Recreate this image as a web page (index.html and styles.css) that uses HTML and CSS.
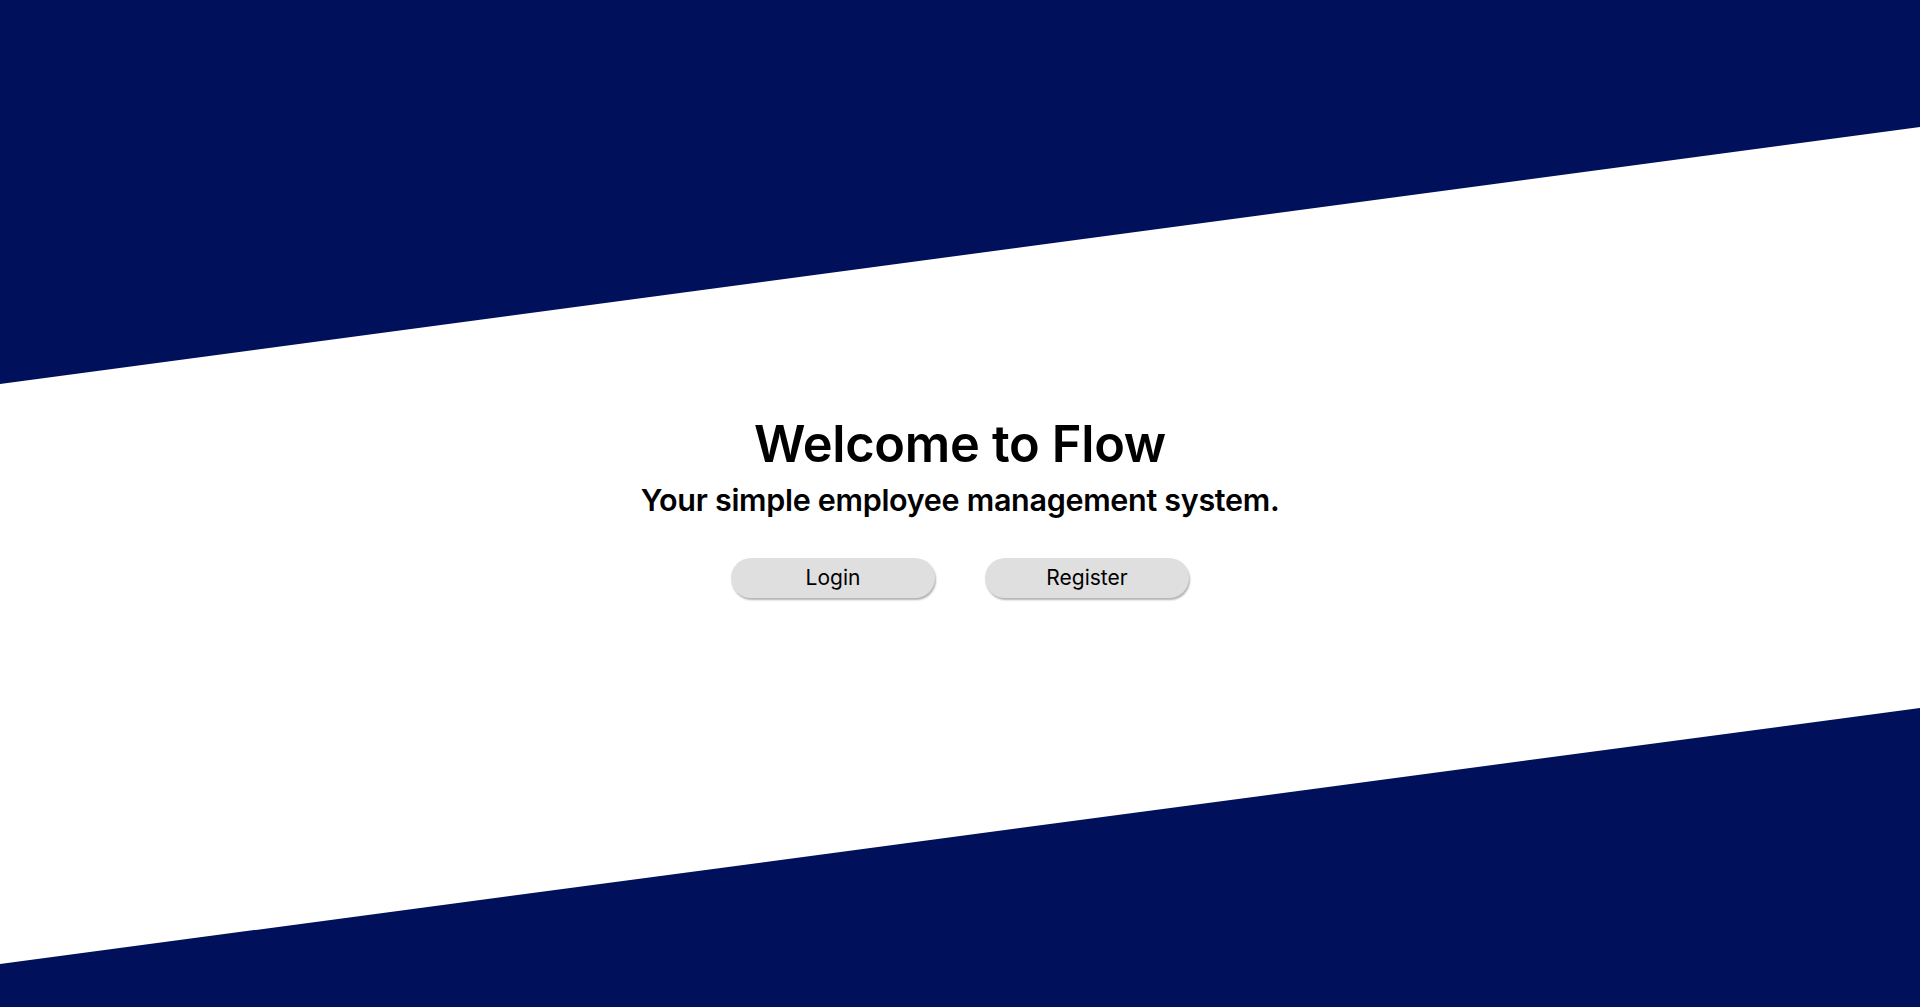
FILE: index.html
```html
<!DOCTYPE html>
<html lang="en">
<head>
<meta charset="utf-8">
<title>Flow</title>
<link rel="stylesheet" href="styles.css">
</head>
<body>
<div class="page">
  <div class="band"></div>
  <main class="hero">
    <h1 class="title">Welcome to Flow</h1>
    <h2 class="subtitle">Your simple employee management system.</h2>
    <div class="actions">
      <button class="btn">Login</button>
      <button class="btn">Register</button>
    </div>
  </main>
</div>
</body>
</html>
```

FILE: styles.css
```css
html, body {
  margin: 0;
  padding: 0;
  height: 100%;
}
body {
  background: #00105a;
  font-family: "Inter", "Noto Sans", sans-serif;
  color: #000;
}
.page {
  position: relative;
  height: 100vh;
  overflow: hidden;
}
.band {
  position: absolute;
  inset: 0;
  background: #fff;
  clip-path: polygon(0 384px, 100% 127px, 100% 708px, 0 964px);
}
.hero {
  position: relative;
  height: 100%;
  display: flex;
  flex-direction: column;
  align-items: center;
  justify-content: center;
  box-sizing: border-box;
  padding-top: 4px;
}
.title {
  margin: 0 0 4px;
  font-size: 50.5px;
  font-weight: 600;
  letter-spacing: -0.3px;
  line-height: 60px;
}
.subtitle {
  margin: 0;
  font-size: 30.5px;
  font-weight: 600;
  letter-spacing: -0.3px;
  line-height: 44px;
}
.actions {
  display: flex;
  gap: 50px;
  margin-top: 36px;
}
.btn {
  width: 204px;
  height: 40px;
  border: none;
  border-radius: 20px;
  background: #dfdfdf;
  box-shadow: 1px 2px 2px rgba(0, 0, 0, 0.3);
  font-family: "Inter", "Noto Sans", sans-serif;
  font-size: 21px;
  color: #000;
  padding: 0;
}
```
